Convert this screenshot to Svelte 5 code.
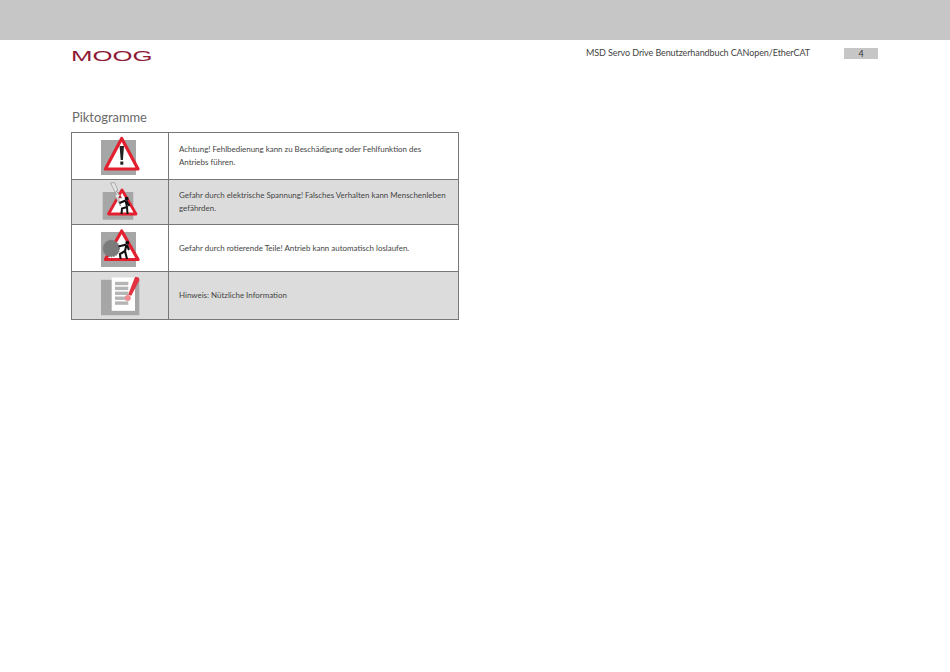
<script>
  const rows = [
    { icon: 'warn', shade: false, text: ['Achtung! Fehlbedienung kann zu Beschädigung oder Fehlfunktion des', 'Antriebs führen.'] },
    { icon: 'volt', shade: true, text: ['Gefahr durch elektrische Spannung! Falsches Verhalten kann Menschenleben', 'gefährden.'] },
    { icon: 'rot', shade: false, text: ['Gefahr durch rotierende Teile! Antrieb kann automatisch loslaufen.'] },
    { icon: 'note', shade: true, text: ['Hinweis: Nützliche Information'] }
  ];
</script>

<div class="page">
  <div class="topbar"></div>
  <header>
    <div class="logo"><span>MOOG</span></div>
    <div class="doc">MSD Servo Drive Benutzerhandbuch CANopen/EtherCAT</div>
    <div class="num">4</div>
  </header>
  <h1>Piktogramme</h1>
  <div class="table">
    {#each rows as r}
      <div class="row {r.icon}" class:shade={r.shade}>
        <div class="pic">
          {#if r.icon === 'warn'}
            <svg width="44" height="44" viewBox="98 134 44 44">
              <rect x="101" y="140" width="35" height="35" fill="#a6a6a6"/>
              <path d="M121.7 138.5 L138 169 H105.4 Z" fill="#fff" stroke="#e2202f" stroke-width="3.2" stroke-linejoin="round"/>
              <path d="M119.6 146 h4.4 l-1.1 14 h-2.2 Z" fill="#222"/>
              <rect x="120.3" y="161.5" width="3" height="3.2" fill="#222"/>
            </svg>
          {:else if r.icon === 'volt'}
            <svg width="44" height="44" viewBox="98 180 44 44">
              <rect x="102.7" y="192" width="30.6" height="27.7" fill="#a6a6a6"/>
              <path d="M122 190 L136 214 H108.5 Z" fill="#fff" stroke="#e2202f" stroke-width="2.8" stroke-linejoin="round"/>
              <path d="M110.5 183 L114.5 182.5 L118 190.5 L116 191 L122 198 L118.5 197.5 L120.5 206 L114.5 195 L116.5 194.5 Z" fill="#e6e6e6" stroke="#8f8f8f" stroke-width=".7"/>
              <circle cx="120" cy="197" r="1.2" fill="#c2202f"/>
              <circle cx="126.7" cy="198.7" r="1.9" fill="#111"/>
              <path d="M125.5 200.5 L119.5 203 M125.5 200.5 L127 207 L122 208.5 L121.5 214 M127 207 L127.5 214 M126.5 201 L129.5 206" stroke="#111" stroke-width="2" fill="none"/>
            </svg>
          {:else if r.icon === 'rot'}
            <svg width="44" height="44" viewBox="98 226 44 44">
              <rect x="101" y="232" width="35" height="35" fill="#a6a6a6"/>
              <path d="M121.7 231 L138 259.5 H105.4 Z" fill="#fff" stroke="#e2202f" stroke-width="3.2" stroke-linejoin="round"/>
              <circle cx="111.3" cy="248.5" r="8.2" fill="#7b7b7b" stroke="#7b7b7b" stroke-width="1.2" stroke-dasharray="1.2 1.2"/>
              <circle cx="127.3" cy="242.7" r="1.9" fill="#111"/>
              <path d="M126.5 244.5 L118.5 246.5 M126.5 244.5 L125 251 L120 254 L120.5 259 M125 251 L127 259 M127 245 L129 250" stroke="#111" stroke-width="2.1" fill="none"/>
            </svg>
          {:else}
            <svg width="44" height="44" viewBox="98 273.5 44 44">
              <rect x="101" y="279.3" width="38.3" height="35.4" fill="#a6a6a6"/>
              <rect x="111.7" y="277" width="23.3" height="33.3" fill="#fff"/>
              <rect x="115" y="281.3" width="13.3" height="3.4" fill="#b5b5b5"/>
              <rect x="115" y="286.2" width="13.3" height="3.4" fill="#b5b5b5"/>
              <rect x="115" y="291.1" width="13.3" height="3.4" fill="#b5b5b5"/>
              <rect x="115" y="296" width="13.3" height="3.4" fill="#b5b5b5"/>
              <rect x="115" y="300.9" width="13.3" height="3.4" fill="#b5b5b5"/>
              <path d="M135 276.6 Q140 275.6 139.2 280 L131.3 295.3 L128.2 294 Z" fill="#e2323f"/>
              <circle cx="127.8" cy="297.4" r="3" fill="#ef8a8f"/>
            </svg>
          {/if}
        </div>
        <div class="txt">
          {#each r.text as line}<div>{line}</div>{/each}
        </div>
      </div>
    {/each}
  </div>
</div>

<style>
  :global(body) { margin: 0; background: #fff; }
  .page { width: 950px; height: 672px; font-family: Lato, "Open Sans", sans-serif; color: #333; overflow: hidden; }
  .topbar { height: 40px; background: #c6c6c6; }
  header { display: flex; align-items: flex-start; padding: 8px 72px 0 72px; height: 52px; box-sizing: border-box; }
  .logo { width: 82px; height: 14px; flex: none; margin-top: -3px; }
  .logo span { display: inline-block; font-family: "Liberation Sans", sans-serif; font-size: 14px; line-height: 14px; color: #8f1a36; transform: scaleX(1.84); transform-origin: 0 50%; margin-left: -1px; }
  .doc { margin-left: auto; font-size: 9px; letter-spacing: -.1px; line-height: 11px; margin-top: -1px; margin-right: 34px; color: #444; white-space: nowrap; }
  .num { width: 34px; height: 11px; background: #c6c6c6; text-align: center; font-size: 9px; line-height: 11px; color: #333; }
  h1 { margin: 16px 0 5px 72px; font-weight: 400; font-size: 12.9px; line-height: 19px; color: #6a6a6a; }
  .table { margin-left: 71px; width: 388px; border: 1px solid #777; border-bottom: 0; box-sizing: border-box; }
  .row { display: grid; grid-template-columns: 97px 1fr; border-bottom: 1px solid #777; box-sizing: border-box; }
  .row.warn { height: 47px; }
  .row.volt { height: 45px; }
  .row.rot { height: 47px; }
  .row.note { height: 48px; }
  .shade { background: #dcdcdc; }
  .pic { display: flex; align-items: center; justify-content: center; border-right: 1px solid #777; }
  .pic svg { display: block; }
  .txt { display: flex; flex-direction: column; justify-content: center; padding-left: 10px; font-size: 7.95px; line-height: 13px; color: #444; white-space: nowrap; }
</style>
